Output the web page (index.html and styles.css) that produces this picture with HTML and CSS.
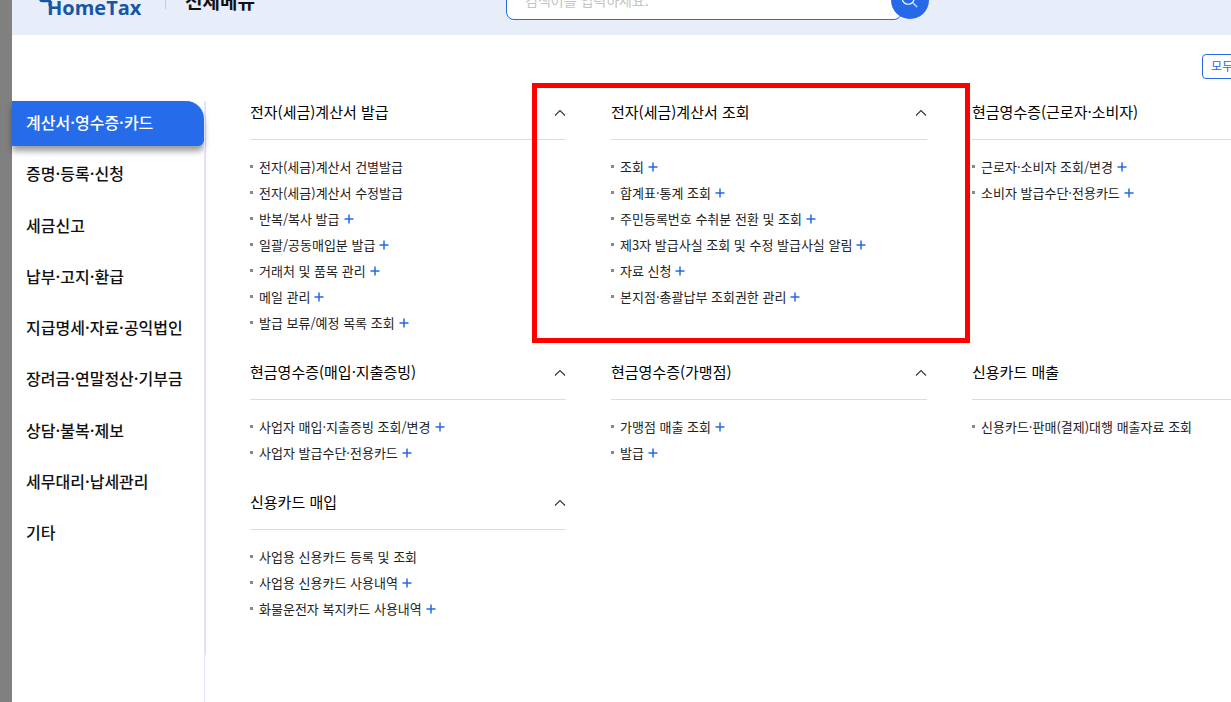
FILE: index.html
```html
<!DOCTYPE html>
<html lang="ko">
<head>
    <meta charset="UTF-8">
    <meta name="viewport" content="width=device-width, initial-scale=1.0">
    <title>전체메뉴 - HomeTax</title>
    <link rel="stylesheet" href="styles.css">
</head>
<body>
    <svg class="defs" aria-hidden="true">
        <symbol id="plus" viewBox="0 0 10 10"><path d="M5 0.5v9M0.5 5h9" fill="none" stroke="#2568e8" stroke-width="1.5"/></symbol>
        <symbol id="up" viewBox="0 0 12 8"><path d="M1 6.5L6 1.5L11 6.5" fill="none" stroke="#333" stroke-width="1.1"/></symbol>
    </svg>

    <div class="page">
        <header class="header">
            <a class="logo" href="#">
                <svg class="logo-mark" viewBox="0 0 12 18" aria-hidden="true"><path d="M0 0h12v6H9.5V2.2H3Q1 2.2 0 0z" fill="#1557a5"/></svg>
                <span>HomeTax</span>
            </a>
            <h1 class="page-title">전체메뉴</h1>
            <form class="search">
                <input type="text" aria-label="검색어" placeholder="검색어를 입력하세요.">
                <button type="button" aria-label="검색">
                    <svg viewBox="0 0 20 20" aria-hidden="true"><circle cx="8" cy="8" r="6.7" fill="none" stroke="#fff" stroke-width="1.3"/><path d="M13 13l5 5" stroke="#a9c3f7" stroke-width="2"/></svg>
                </button>
            </form>
        </header>

        <div class="toolbar">
            <button class="btn-open" type="button">모두 펼치기</button>
        </div>

        <div class="body">
            <nav class="side">
                <ul>
                    <li><a class="active" href="#">계산서·영수증·카드</a></li>
                    <li><a href="#">증명·등록·신청</a></li>
                    <li><a href="#">세금신고</a></li>
                    <li><a href="#">납부·고지·환급</a></li>
                    <li><a href="#">지급명세·자료·공익법인</a></li>
                    <li><a href="#">장려금·연말정산·기부금</a></li>
                    <li><a href="#">상담·불복·제보</a></li>
                    <li><a href="#">세무대리·납세관리</a></li>
                    <li><a href="#">기타</a></li>
                </ul>
            </nav>

            <main class="menus">
                <section class="menu">
                    <h2>전자(세금)계산서 발급 <button type="button" aria-label="접기"><svg><use href="#up"/></svg></button></h2>
                    <ul>
                        <li><a href="#">전자(세금)계산서 건별발급</a></li>
                        <li><a href="#">전자(세금)계산서 수정발급</a></li>
                        <li><a href="#">반복/복사 발급 <svg><use href="#plus"/></svg></a></li>
                        <li><a href="#">일괄/공동매입분 발급 <svg><use href="#plus"/></svg></a></li>
                        <li><a href="#">거래처 및 품목 관리 <svg><use href="#plus"/></svg></a></li>
                        <li><a href="#">메일 관리 <svg><use href="#plus"/></svg></a></li>
                        <li><a href="#">발급 보류/예정 목록 조회 <svg><use href="#plus"/></svg></a></li>
                    </ul>
                </section>

                <section class="menu marked">
                    <h2>전자(세금)계산서 조회 <button type="button" aria-label="접기"><svg><use href="#up"/></svg></button></h2>
                    <ul>
                        <li><a href="#">조회 <svg><use href="#plus"/></svg></a></li>
                        <li><a href="#">합계표·통계 조회 <svg><use href="#plus"/></svg></a></li>
                        <li><a href="#">주민등록번호 수취분 전환 및 조회 <svg><use href="#plus"/></svg></a></li>
                        <li><a href="#">제3자 발급사실 조회 및 수정 발급사실 알림 <svg><use href="#plus"/></svg></a></li>
                        <li><a href="#">자료 신청 <svg><use href="#plus"/></svg></a></li>
                        <li><a href="#">본지점·총괄납부 조회권한 관리 <svg><use href="#plus"/></svg></a></li>
                    </ul>
                </section>

                <section class="menu">
                    <h2>현금영수증(근로자·소비자)</h2>
                    <ul>
                        <li><a href="#">근로자·소비자 조회/변경 <svg><use href="#plus"/></svg></a></li>
                        <li><a href="#">소비자 발급수단·전용카드 <svg><use href="#plus"/></svg></a></li>
                    </ul>
                </section>

                <section class="menu">
                    <h2>현금영수증(매입·지출증빙) <button type="button" aria-label="접기"><svg><use href="#up"/></svg></button></h2>
                    <ul>
                        <li><a href="#">사업자 매입·지출증빙 조회/변경 <svg><use href="#plus"/></svg></a></li>
                        <li><a href="#">사업자 발급수단·전용카드 <svg><use href="#plus"/></svg></a></li>
                    </ul>
                </section>

                <section class="menu">
                    <h2>현금영수증(가맹점) <button type="button" aria-label="접기"><svg><use href="#up"/></svg></button></h2>
                    <ul>
                        <li><a href="#">가맹점 매출 조회 <svg><use href="#plus"/></svg></a></li>
                        <li><a href="#">발급 <svg><use href="#plus"/></svg></a></li>
                    </ul>
                </section>

                <section class="menu">
                    <h2>신용카드 매출</h2>
                    <ul>
                        <li><a href="#">신용카드·판매(결제)대행 매출자료 조회</a></li>
                    </ul>
                </section>

                <section class="menu">
                    <h2>신용카드 매입 <button type="button" aria-label="접기"><svg><use href="#up"/></svg></button></h2>
                    <ul>
                        <li><a href="#">사업용 신용카드 등록 및 조회</a></li>
                        <li><a href="#">사업용 신용카드 사용내역 <svg><use href="#plus"/></svg></a></li>
                        <li><a href="#">화물운전자 복지카드 사용내역 <svg><use href="#plus"/></svg></a></li>
                    </ul>
                </section>
            </main>
        </div>
    </div>
</body>
</html>
```
FILE: styles.css
```css
*,
*::before,
*::after {
    box-sizing: border-box;
}
body {
    margin: 0;
    font-family: "Noto Sans CJK KR", sans-serif;
    color: #111;
    background: #fff;
    overflow: hidden;
}
ul {
    list-style: none;
    margin: 0;
    padding: 0;
}
a {
    color: inherit;
    text-decoration: none;
}
button {
    font-family: inherit;
    cursor: pointer;
}
.defs {
    display: none;
}
.page {
    display: flex;
    flex-direction: column;
    min-height: 100vh;
    border-left: 12px solid #808080;
}

/* header */
.header {
    display: flex;
    align-items: flex-end;
    height: 35px;
    padding-left: 27px;
    background: #e8eef9;
    overflow: hidden;
}
.logo {
    display: flex;
    align-items: flex-end;
    width: 127px;
    height: 36px;
    margin-bottom: 26px;
    border-right: 1px solid #c5cad3;
    font-family: "Open Sans", sans-serif;
    font-size: 20px;
    font-weight: 700;
    line-height: 28px;
    color: #1557a5;
}
.logo span {
    margin-bottom: -13px;
}
.logo-mark {
    flex: none;
    width: 12px;
    height: 18px;
    margin: 0 -4px -9px 0;
}
.page-title {
    width: 321px;
    margin: 0 0 20px 19px;
    font-size: 19px;
    font-weight: 700;
    line-height: 28px;
}
.search {
    display: flex;
    align-items: center;
    margin-bottom: 15px;
}
.search input {
    width: 396px;
    height: 40px;
    padding: 0 18px;
    border: 1px solid #2568e8;
    border-radius: 8px;
    background: #fff;
    font-family: inherit;
    font-size: 14px;
}
.search input::placeholder {
    color: #c4c4c4;
}
.search button {
    display: flex;
    align-items: center;
    justify-content: center;
    width: 38px;
    height: 38px;
    margin: 0 0 0 -11px;
    padding: 0;
    border: 0;
    border-radius: 50%;
    background: #2568e8;
}
.search svg {
    width: 18px;
    height: 18px;
}

.toolbar {
    display: flex;
    justify-content: flex-end;
    height: 66px;
    padding-top: 19px;
    margin-right: -56px;
}
.btn-open {
    height: 25px;
    width: 85px;
    padding: 0 8px 2px;
    border: 1px solid #2568e8;
    border-radius: 4px;
    background: #fff;
    color: #2568e8;
    font-size: 12px;
    line-height: 20px;
    text-align: left;
    white-space: nowrap;
}

/* left menu */
.body {
    display: flex;
    flex: 1;
}
.side {
    flex: none;
    align-self: flex-start;
    width: 194px;
    min-height: 554px;
    margin-right: -2px;
    border-right: 2px solid #e4e0ff;
}
.side ul {
    display: flex;
    flex-direction: column;
    justify-content: space-between;
    height: 455px;
}
.side a {
    display: block;
    padding: 0 14px 3px;
    font-size: 16px;
    font-weight: 500;
    line-height: 42px;
}
.side a.active {
    background: #256bea;
    border-radius: 0 18px 6px 0;
    box-shadow: 0 5px 6px rgba(0, 0, 0, 0.4);
    color: #fff;
}

/* menu groups */
.menus {
    display: grid;
    grid-template-columns: repeat(3, 316px);
    align-content: start;
    column-gap: 45px;
    margin-top: -16px;
    padding: 0 0 0 46px;
    background: linear-gradient(#e4e0ff, #e4e0ff) 0 16px / 1px 100% no-repeat;
}
.menu {
    position: relative;
    padding-bottom: 9px;
}
.menu h2 {
    display: flex;
    align-items: center;
    justify-content: space-between;
    height: 55px;
    margin: 0;
    padding-bottom: 2px;
    border-bottom: 1px solid #ddd;
    font-size: 15px;
    font-weight: 400;
    color: #000;
}
.menu h2 button {
    display: flex;
    margin-top: 3px;
    padding: 0;
    border: 0;
    background: none;
}
.menu h2 svg {
    width: 12px;
    height: 8px;
}
.menu ul {
    padding-top: 14px;
}
.menu li {
    display: flex;
    align-items: center;
    height: 26px;
    padding-bottom: 2px;
    font-size: 13px;
    color: #222;
}
.menu li::before {
    content: "";
    width: 3px;
    height: 3px;
    margin-right: 6px;
    background: #888;
}
.menu li a {
    display: flex;
    align-items: center;
    gap: 4px;
    white-space: nowrap;
}
.menu li svg {
    width: 10px;
    height: 10px;
    margin-top: 2px;
}

/* red box round the group */
.marked::after {
    content: "";
    position: absolute;
    z-index: 1;
    top: -2px;
    left: -79px;
    width: 438px;
    height: 260px;
    border: 5px solid #f00;
    pointer-events: none;
}
```
